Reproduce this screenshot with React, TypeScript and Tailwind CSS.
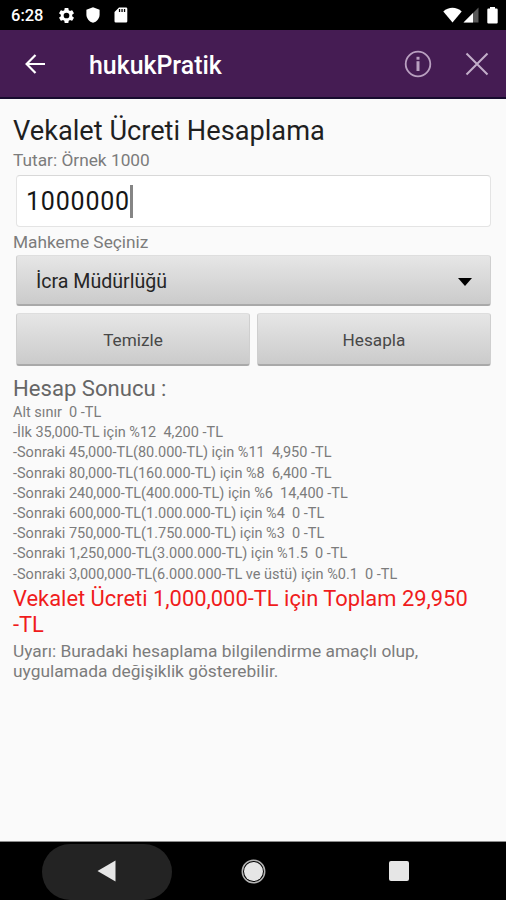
import { useState } from "react"

const resultLines = [
  "Alt sınır  0 -TL",
  "-İlk 35,000-TL için %12  4,200 -TL",
  "-Sonraki 45,000-TL(80.000-TL) için %11  4,950 -TL",
  "-Sonraki 80,000-TL(160.000-TL) için %8  6,400 -TL",
  "-Sonraki 240,000-TL(400.000-TL) için %6  14,400 -TL",
  "-Sonraki 600,000-TL(1.000.000-TL) için %4  0 -TL",
  "-Sonraki 750,000-TL(1.750.000-TL) için %3  0 -TL",
  "-Sonraki 1,250,000-TL(3.000.000-TL) için %1.5  0 -TL",
  "-Sonraki 3,000,000-TL(6.000.000-TL ve üstü) için %0.1  0 -TL",
]

const buttonStyle =
  "rounded-[3px] border border-b-2 border-[#cfcfcf] border-t-[#dedede] border-b-[#a9a9a9] bg-linear-to-b from-[#e6e6e6] to-[#cbcbcb]"

function StatusBar() {
  return (
    <div className="flex h-[30px] items-center justify-between bg-black pl-[11px] pr-[8px] text-white">
      <div className="flex items-center">
        <span className="mt-[2px] w-[46px] text-[16.5px] font-medium leading-none">6:28</span>
        <svg className="h-[19px] w-[19px]" viewBox="0 0 24 24" fill="currentColor">
          <path d="M19.14 12.94c.04-.3.06-.61.06-.94s-.02-.64-.07-.94l2.03-1.58a.49.49 0 0 0 .12-.61l-1.92-3.32a.49.49 0 0 0-.59-.22l-2.39.96a7 7 0 0 0-1.62-.94l-.36-2.54a.48.48 0 0 0-.48-.41h-3.84a.48.48 0 0 0-.47.41l-.36 2.54c-.59.24-1.13.57-1.62.94l-2.39-.96a.48.48 0 0 0-.59.22L2.74 8.87a.48.48 0 0 0 .12.61l2.03 1.58a7.4 7.4 0 0 0 0 1.88l-2.03 1.58a.49.49 0 0 0-.12.61l1.92 3.32c.12.22.37.29.59.22l2.39-.96c.5.38 1.03.7 1.62.94l.36 2.54c.05.24.24.41.48.41h3.84c.24 0 .44-.17.47-.41l.36-2.54c.59-.24 1.13-.56 1.62-.94l2.39.96c.22.08.47 0 .59-.22l1.92-3.32a.48.48 0 0 0-.12-.61zM12 15.6a3.6 3.6 0 1 1 0-7.2 3.6 3.6 0 0 1 0 7.2z" />
        </svg>
        <svg className="ml-[10px] h-[16px] w-[14px]" viewBox="0 0 14 16" fill="currentColor">
          <path d="M7 .3 13.6 2.8V7.5C13.6 11.5 10.8 14.8 7 15.8 3.2 14.8.4 11.5.4 7.5V2.8z" />
        </svg>
        <svg className="ml-[14px] h-[16px] w-[14px]" viewBox="0 0 14 16" fill="currentColor">
          <path
            fillRule="evenodd"
            d="M5 .4h7a1.3 1.3 0 0 1 1.3 1.3v12.6a1.3 1.3 0 0 1-1.3 1.3H1.8a1.3 1.3 0 0 1-1.3-1.3V5zM4.9 2.1v3h1.3v-3zM7.4 2.1v3h1.3v-3zM9.9 2.1v3h1.3v-3z"
          />
        </svg>
      </div>
      <div className="flex items-center">
        <svg className="h-[16px] w-[19px]" viewBox="0 0 19 16" fill="currentColor">
          <path d="M.3 4.4C5.5-.4 13.5-.4 18.7 4.4L9.5 15.6z" />
        </svg>
        <svg className="ml-[1px] h-[16px] w-[16px]" viewBox="0 0 16 16" fill="currentColor">
          <path d="M15.5.5V15.5H.5z" opacity="0.35" />
          <path d="M10 6V15.5H.5z" />
        </svg>
        <svg className="ml-[8px] h-[17px] w-[11px]" viewBox="0 0 11 17" fill="currentColor">
          <path d="M3 0h5v1.6h1.6a1.1 1.1 0 0 1 1.1 1.1v12.8a1.1 1.1 0 0 1-1.1 1.1H1.4a1.1 1.1 0 0 1-1.1-1.1V2.7a1.1 1.1 0 0 1 1.1-1.1H3z" />
        </svg>
      </div>
    </div>
  )
}

function AppBar() {
  return (
    <header className="flex h-[69px] items-center border-b-2 border-[#170b2e] bg-[#451c53] pl-[25px] pr-[17px]">
      <button aria-label="Geri">
        <svg className="h-[20px] w-[21px]" viewBox="0 0 21 20" fill="none" stroke="#fff" strokeWidth="2.2">
          <path d="M20 10H2M10.5 1 1.6 10l8.9 9" />
        </svg>
      </button>
      <h1 className="ml-[43px] mt-[6px] text-[24.9px] font-medium leading-none text-white">hukukPratik</h1>
      <div className="ml-auto flex items-center gap-[33px]">
        <button aria-label="Bilgi">
          <svg className="mt-[1px] h-[28px] w-[28px]" viewBox="0 0 28 28" fill="none" stroke="#b9a0c0">
            <circle cx="14" cy="14" r="12.3" strokeWidth="1.8" />
            <path d="M14 11.2V21" strokeWidth="3" />
            <path d="M14 6.8V9.7" strokeWidth="3" />
          </svg>
        </button>
        <button aria-label="Kapat">
          <svg className="mt-[1px] h-[24px] w-[24px]" viewBox="0 0 24 24" fill="none" stroke="#c3aeca" strokeWidth="2">
            <path d="M1.5 1.5l21 21M22.5 1.5l-21 21" />
          </svg>
        </button>
      </div>
    </header>
  )
}

function NavigationBar() {
  return (
    <nav className="flex h-[58px] items-center bg-black pl-[42px]">
      <button
        aria-label="Geri"
        className="mt-[2px] flex h-[56px] w-[130px] items-center justify-center rounded-[28px] bg-[#232323]"
      >
        <svg className="mb-[2px] mr-[2px] h-[22px] w-[19px]" viewBox="0 0 19 22" fill="#e6e6e6">
          <path d="M18.5.5v21L.5 11z" />
        </svg>
      </button>
      <button aria-label="Ana ekran" className="ml-[69px]">
        <svg className="h-[25px] w-[25px]" viewBox="0 0 25 25" fill="#e6e6e6">
          <circle cx="12.5" cy="12.5" r="11.2" fill="none" stroke="#b5b5b5" strokeWidth="1.5" />
          <circle cx="12.5" cy="12.5" r="9.5" />
        </svg>
      </button>
      <button aria-label="Son uygulamalar" className="ml-[123px] h-[20px] w-[20px] rounded-[2px] bg-[#e6e6e6]" />
    </nav>
  )
}

export default function App() {
  const [amount, setAmount] = useState("1000000")

  return (
    <div className="flex h-[900px] w-[506px] flex-col overflow-hidden bg-[#fafafa] font-[Roboto,sans-serif]">
      <StatusBar />
      <AppBar />
      <main className="flex-1 border-b border-[#8c8c8c] px-[13px] pt-[15px] text-[#7c7c7c]">
        <h2 className="h-[36px] whitespace-nowrap text-[27.2px] leading-[34px] text-[#1f1f1f]">
          Vekalet Ücreti Hesaplama
        </h2>
        <p className="h-[25px] text-[17.3px] leading-[21px]">Tutar: Örnek 1000</p>
        <div className="mx-[3px] flex h-[52px] w-[475px] items-center rounded-[4px] border border-[#e4e4e4] border-t-[#d8d8d8] bg-white pl-[9px]">
          <span className="text-[25px] leading-none tracking-[0.8px] text-[#161616]">{amount}</span>
          <span className="h-[33px] w-[3px] bg-[#858585]" />
        </div>
        <p className="h-[28px] pt-[5px] text-[17.3px] leading-[21px]">Mahkeme Seçiniz</p>
        <button className={`${buttonStyle} mx-[3px] flex h-[51px] w-[475px] items-center justify-between pl-[19px] pr-[18px]`}>
          <span className="mt-[4px] text-[19.6px] leading-none text-[#262626]">İcra Müdürlüğü</span>
          <svg className="mt-[3px] h-[8px] w-[14px]" viewBox="0 0 14 8" fill="#000">
            <path d="M0 0h14L7 8z" />
          </svg>
        </button>
        <div className="mx-[3px] mt-[7px] flex w-[475px] gap-[7px]">
          <button className={`${buttonStyle} h-[53px] flex-1 pt-[3px] text-[17.2px] text-[#484848]`} onClick={() => setAmount("")}>
            Temizle
          </button>
          <button className={`${buttonStyle} h-[53px] flex-1 pt-[3px] text-[17.2px] text-[#484848]`}>Hesapla</button>
        </div>
        <h3 className="mt-[8px] h-[29px] text-[22.1px] leading-[28px] text-[#666]">Hesap Sonucu :</h3>
        <ul>
          {resultLines.map((line) => (
            <li key={line} className="h-[20.2px] whitespace-pre text-[14.5px] leading-[20.2px]">
              {line}
            </li>
          ))}
        </ul>
        <p className="mt-[1px] whitespace-pre text-[21.9px] leading-[26px] text-[#f01c1c]">
          {"Vekalet Ücreti 1,000,000-TL için Toplam 29,950\n-TL"}
        </p>
        <p className="mt-[3px] whitespace-pre text-[17.35px] leading-[20px]">
          {"Uyarı: Buradaki hesaplama bilgilendirme amaçlı olup,\nuygulamada değişiklik gösterebilir."}
        </p>
      </main>
      <NavigationBar />
    </div>
  )
}
